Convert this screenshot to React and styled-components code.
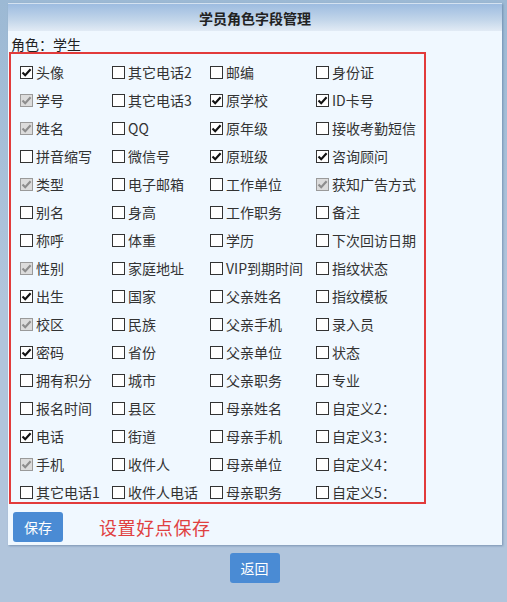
import { createGlobalStyle } from "styled-components";
import styled from "styled-components";

const GlobalStyle = createGlobalStyle`
  html, body {
    margin: 0;
    padding: 0;
  }
  body {
    width: 507px;
    min-height: 602px;
    background: linear-gradient(#9cb9d4, #b1c5dc 300px, #b1c5dc);
    font-family: "Microsoft YaHei", "Noto Sans CJK SC", sans-serif;
    font-size: 14px;
    color: #333;
  }
`;

// [label, state]  state: 0 = unchecked, 1 = checked, 2 = checked & disabled
const rows = [
  [["头像", 1], ["其它电话2", 0], ["邮编", 0], ["身份证", 0]],
  [["学号", 2], ["其它电话3", 0], ["原学校", 1], ["ID卡号", 1]],
  [["姓名", 2], ["QQ", 0], ["原年级", 1], ["接收考勤短信", 0]],
  [["拼音缩写", 0], ["微信号", 0], ["原班级", 1], ["咨询顾问", 1]],
  [["类型", 2], ["电子邮箱", 0], ["工作单位", 0], ["获知广告方式", 2]],
  [["别名", 0], ["身高", 0], ["工作职务", 0], ["备注", 0]],
  [["称呼", 0], ["体重", 0], ["学历", 0], ["下次回访日期", 0]],
  [["性别", 2], ["家庭地址", 0], ["VIP到期时间", 0], ["指纹状态", 0]],
  [["出生", 1], ["国家", 0], ["父亲姓名", 0], ["指纹模板", 0]],
  [["校区", 2], ["民族", 0], ["父亲手机", 0], ["录入员", 0]],
  [["密码", 1], ["省份", 0], ["父亲单位", 0], ["状态", 0]],
  [["拥有积分", 0], ["城市", 0], ["父亲职务", 0], ["专业", 0]],
  [["报名时间", 0], ["县区", 0], ["母亲姓名", 0], ["自定义2：", 0]],
  [["电话", 1], ["街道", 0], ["母亲手机", 0], ["自定义3：", 0]],
  [["手机", 2], ["收件人", 0], ["母亲单位", 0], ["自定义4：", 0]],
  [["其它电话1", 0], ["收件人电话", 0], ["母亲职务", 0], ["自定义5：", 0]],
];

function CheckMark({ color }) {
  return (
    <svg width="11" height="11" viewBox="0 0 11 11">
      <path d="M1.5 5.5 L4.2 8.3 L9.6 2.2" fill="none" stroke={color} strokeWidth="2.1" />
    </svg>
  );
}

function Field({ label, state }) {
  return (
    <FieldLabel>
      <Box disabled={state === 2}>
        {state > 0 && <CheckMark color={state === 2 ? "#8d8d8d" : "#111"} />}
      </Box>
      {label}
    </FieldLabel>
  );
}

export default function App() {
  return (
    <>
      <GlobalStyle />
      <Panel>
        <Header>学员角色字段管理</Header>
        <Body>
          <Role>角色：学生</Role>
          <FieldBox>
            {rows.flat().map(([label, state]) => (
              <Field key={label} label={label} state={state} />
            ))}
          </FieldBox>
          <SaveRow>
            <Button>保存</Button>
            <Hint>设置好点保存</Hint>
          </SaveRow>
        </Body>
      </Panel>
      <Footer>
        <Button>返回</Button>
      </Footer>
    </>
  );
}

const Panel = styled.div`
  margin: 3px 0 0 8px;
  width: 494px;
  background: #f0f8ff;
  box-shadow: 1px 1px 2px rgba(60, 90, 130, 0.45);
`;

const Header = styled.div`
  height: 27px;
  border-top: 1px solid #d4e2f0;
  background: linear-gradient(#9dbce0, #c3d6ea 60%, #e2ebf5);
  display: flex;
  align-items: center;
  justify-content: center;
  font-weight: bold;
  font-size: 14px;
  color: #222;
`;

const Body = styled.div`
  padding: 1px 0 3px 1px;
`;

const Role = styled.div`
  padding-left: 2px;
  height: 20px;
  line-height: 24px;
  color: #222;
`;

const FieldBox = styled.div`
  width: 404px;
  border: 2px solid #e23b3b;
  padding: 8px 0 0 9px;
  display: grid;
  grid-template-columns: 92px 98px 106px 1fr;
  grid-auto-rows: 20px;
  row-gap: 8px;
`;

const FieldLabel = styled.label`
  display: flex;
  align-items: center;
  gap: 3px;
  white-space: nowrap;
  color: #333;
  font-size: 14px;
`;

const Box = styled.span`
  width: 13px;
  height: 13px;
  box-sizing: border-box;
  border: 1px solid ${(p) => (p.disabled ? "#9a9a9a" : "#333")};
  background: ${(p) => (p.disabled ? "#dcdcdc" : "#fff")};
  display: flex;
  align-items: center;
  justify-content: center;
  flex-shrink: 0;
`;

const SaveRow = styled.div`
  display: flex;
  align-items: center;
  gap: 36px;
  padding: 8px 0 0 4px;
`;

const Button = styled.button`
  width: 50px;
  height: 30px;
  border: none;
  border-radius: 3px;
  background: #4a8bd4;
  color: #fff;
  font-family: inherit;
  font-size: 14px;
  padding: 0;
  cursor: pointer;
`;

const Hint = styled.span`
  color: #e04040;
  font-size: 18px;
  letter-spacing: 0.6px;
`;

const Footer = styled.div`
  display: flex;
  justify-content: center;
  padding: 8px 0 0 2px;
`;
